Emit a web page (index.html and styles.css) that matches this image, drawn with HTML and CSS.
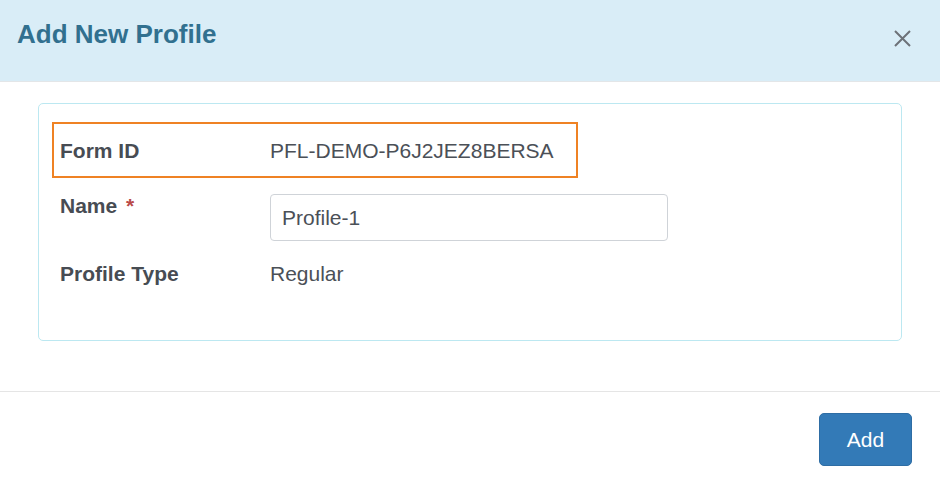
FILE: index.html
```html
<!DOCTYPE html>
<html lang="en">
<head>
<meta charset="utf-8">
<title>Add New Profile</title>
<link rel="stylesheet" href="styles.css">
</head>
<body>
<div class="modal">
  <div class="modal-header">
    <h4 class="modal-title">Add New Profile</h4>
    <button class="close" type="button" aria-label="Close">
      <svg width="17" height="17" viewBox="0 0 17 17"><path d="M1 1 L16 16 M16 1 L1 16" stroke="#6d7278" stroke-width="2" fill="none"/></svg>
    </button>
  </div>
  <div class="modal-body">
    <div class="card">
      <div class="row row-highlight">
        <div class="label">Form ID</div>
        <div class="value">PFL-DEMO-P6J2JEZ8BERSA</div>
      </div>
      <div class="row row-name">
        <div class="label">Name <span class="req">*</span></div>
        <div class="value"><input class="input" type="text" value="Profile-1"></div>
      </div>
      <div class="row row-type">
        <div class="label">Profile Type</div>
        <div class="value">Regular</div>
      </div>
    </div>
  </div>
  <div class="modal-footer">
    <button class="btn" type="button">Add</button>
  </div>
</div>
</body>
</html>
```

FILE: styles.css
```css
html, body {
  margin: 0;
  padding: 0;
  background: #ffffff;
  font-family: "Liberation Sans", Arial, sans-serif;
}

.modal {
  width: 940px;
  height: 482px;
  background: #fff;
}

.modal-header {
  display: flex;
  justify-content: space-between;
  align-items: flex-start;
  height: 82px;
  box-sizing: border-box;
  padding: 19px 29px 0 17px;
  background: #d9edf7;
  border-bottom: 1px solid #e3e6e8;
}

.modal-title {
  margin: 0;
  font-size: 26px;
  line-height: 30px;
  font-weight: bold;
  color: #31708f;
}

.close {
  margin-top: 11px;
  padding: 0;
  border: 0;
  background: transparent;
  width: 17px;
  height: 17px;
  display: block;
}

.close svg {
  display: block;
}

.modal-body {
  padding: 21px 38px 50px 38px;
}

.card {
  border: 1px solid #bce8f1;
  border-radius: 5px;
  padding: 18px 13px 53px 13px;
  height: 238px;
  box-sizing: border-box;
}

.row {
  display: grid;
  grid-template-columns: 210px 1fr;
  align-items: start;
  padding-left: 8px;
  font-size: 21px;
  line-height: 24px;
}

.row-highlight {
  width: 526px;
  box-sizing: border-box;
  border: 2px solid #ef8224;
  padding: 15px 0 13px 6px;
}

.row-name {
  margin-top: 16px;
}

.row-type {
  margin-top: 21px;
}

.label {
  font-weight: bold;
  color: #474c53;
}

.value {
  color: #4b5057;
}

.req {
  color: #b94a48;
  margin-left: 3px;
}

.input {
  display: block;
  width: 398px;
  height: 47px;
  box-sizing: border-box;
  border: 1px solid #cfd3d8;
  border-radius: 4px;
  padding: 1px 11px 0 11px;
  font-family: "Liberation Sans", Arial, sans-serif;
  font-size: 21px;
  color: #4b5057;
  background: #fff;
  outline: none;
}

.modal-footer {
  display: flex;
  justify-content: flex-end;
  border-top: 1px solid #e5e5e5;
  padding: 21px 28px 0 0;
}

.btn {
  width: 93px;
  height: 53px;
  background: #337ab7;
  border: 1px solid #2e6da4;
  border-radius: 5px;
  color: #fff;
  font-family: "Liberation Sans", Arial, sans-serif;
  font-size: 21px;
  padding: 0;
}
```
